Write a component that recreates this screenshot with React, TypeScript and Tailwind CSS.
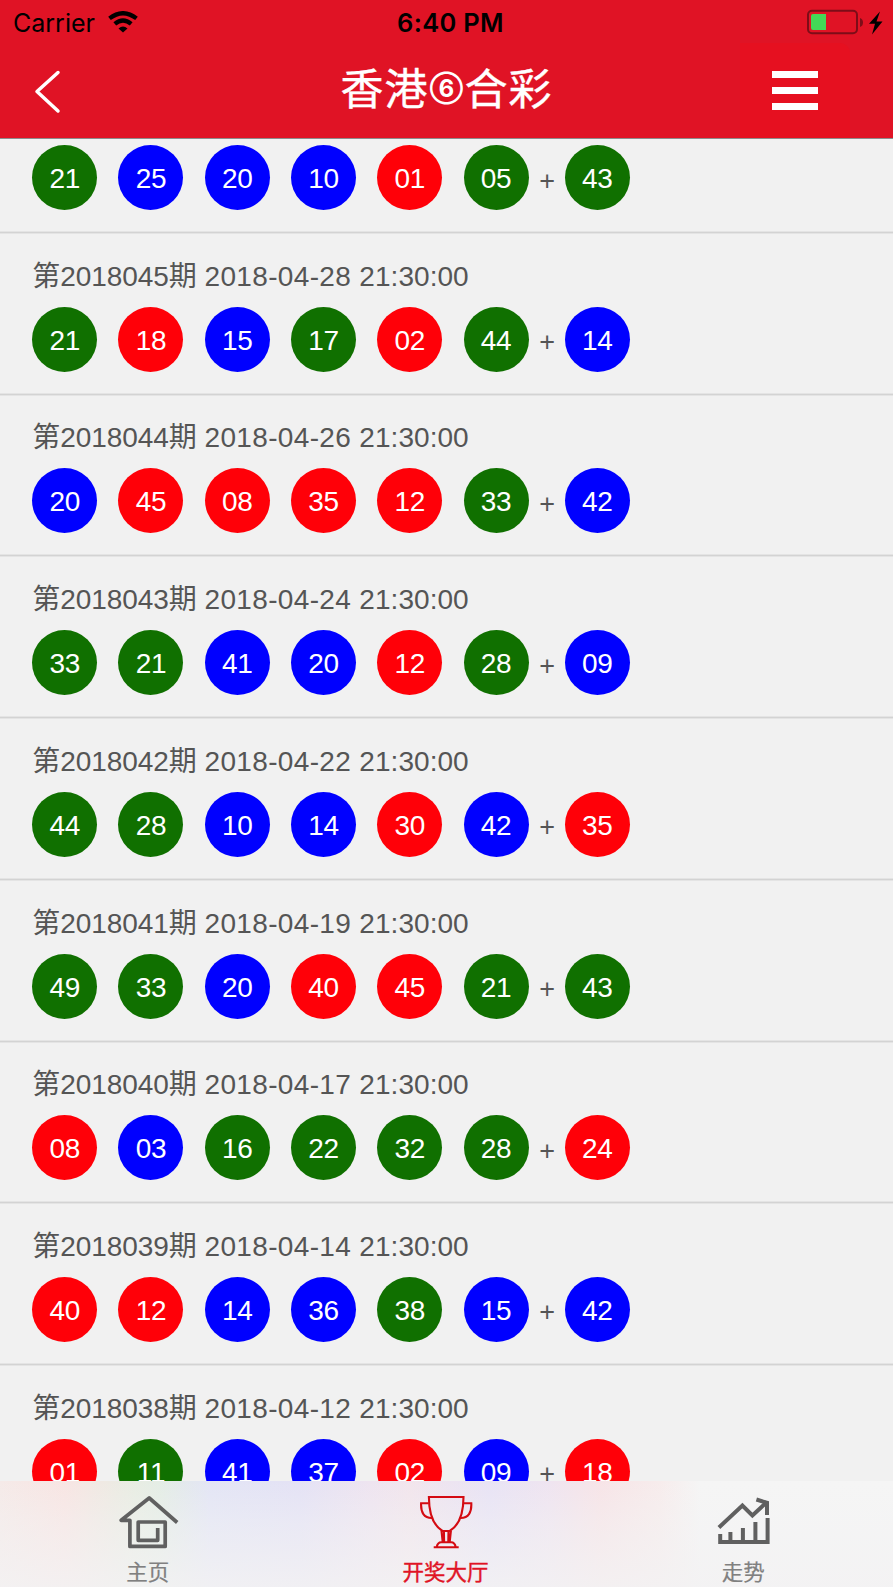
import React from "react";

type Tone = "g" | "b" | "r";

interface Draw {
  issue: string;
  date: string;
  balls: string[];
  tones: string;
}

const toneClass: Record<Tone, string> = {
  g: "bg-[#107000]",
  b: "bg-[#0000ff]",
  r: "bg-[#ff0008]",
};

const draws: Draw[] = [
  { issue: "2018045", date: "2018-04-28", balls: ["21", "18", "15", "17", "02", "44", "14"], tones: "grbgrgb" },
  { issue: "2018044", date: "2018-04-26", balls: ["20", "45", "08", "35", "12", "33", "42"], tones: "brrrrgb" },
  { issue: "2018043", date: "2018-04-24", balls: ["33", "21", "41", "20", "12", "28", "09"], tones: "ggbbrgb" },
  { issue: "2018042", date: "2018-04-22", balls: ["44", "28", "10", "14", "30", "42", "35"], tones: "ggbbrbr" },
  { issue: "2018041", date: "2018-04-19", balls: ["49", "33", "20", "40", "45", "21", "43"], tones: "ggbrrgg" },
  { issue: "2018040", date: "2018-04-17", balls: ["08", "03", "16", "22", "32", "28", "24"], tones: "rbggggr" },
  { issue: "2018039", date: "2018-04-14", balls: ["40", "12", "14", "36", "38", "15", "42"], tones: "rrbbgbb" },
  { issue: "2018038", date: "2018-04-12", balls: ["01", "11", "41", "37", "02", "09", "18"], tones: "rgbbrbr" },
];

function Ball({ value, tone }: { value: string; tone: Tone }) {
  return (
    <span
      className={`flex size-[65px] shrink-0 items-center justify-center rounded-full pt-[3px] text-[28px] leading-none tracking-[-0.3px] text-white ${toneClass[tone]}`}
    >
      {value}
    </span>
  );
}

function BallRow({ balls, tones }: { balls: string[]; tones: string }) {
  return (
    <div className="flex items-center">
      <div className="flex gap-[21.27px]">
        {balls.slice(0, 6).map((value, i) => (
          <Ball key={i} value={value} tone={tones[i] as Tone} />
        ))}
      </div>
      <span className="flex w-[36.2px] justify-center pt-[7px] pl-[1px] text-[27px] leading-none text-[#555]">+</span>
      <Ball value={balls[6]} tone={tones[6] as Tone} />
    </div>
  );
}

function Separator() {
  return <div className="mt-[21px] h-[3px] w-full shrink-0 border-y border-[#e4e4e4] bg-[#d3d3d3]" />;
}

function DrawRow({ draw }: { draw: Draw }) {
  return (
    <li className="flex h-[161.71px] shrink-0 flex-col justify-end">
      <div className="pl-[32.2px]">
        <p className="mb-[10px] text-[28px] leading-[40px] tracking-[-0.05px] whitespace-pre text-[#555]">
          {`第${draw.issue}期 `}
          <span className="tracking-[0.35px]">{`${draw.date} `}</span>
          <span className="tracking-[0.05px]">21:30:00</span>
        </p>
        <BallRow balls={draw.balls} tones={draw.tones} />
      </div>
      <Separator />
    </li>
  );
}

function StatusBar() {
  return (
    <div className="grid h-[43px] grid-cols-3 items-center text-black">
      <div className="flex items-center gap-[13px] pl-[13px] font-['Inter','Liberation_Sans',sans-serif]">
        <span className="pt-[3px] text-[25px] leading-none tracking-[0px]">Carrier</span>
        <svg width="30" height="22" viewBox="0 0 30 22" className="mt-[1px]">
          <path d="M15 21.5 L19.500 17.4 Q15 13.5 10.500 17.4 Z" />
          <path d="M6.800 12.900 Q15 6 23.200 12.900" fill="none" stroke="black" strokeWidth="4.300" />
          <path d="M1.500 7.400 Q15 -3 28.500 7.400" fill="none" stroke="black" strokeWidth="4.300" />
        </svg>
      </div>
      <span className="pt-[3px] pl-[8px] text-center font-['Inter',sans-serif] text-[25.5px] leading-none font-semibold tracking-[0.3px]">
        6:40 PM
      </span>
      <div className="flex items-center justify-end pr-[10px]">
        <svg width="80" height="26" viewBox="0 0 80 26">
          <rect x="5" y="1.800" width="49" height="22.400" rx="4" fill="none" stroke="#7d0d18" strokeWidth="2" />
          <path d="M10 5h13v16H10a2 2 0 0 1-2-2V7a2 2 0 0 1 2-2z" fill="#44d857" />
          <path d="M57 9q3 1 3 4.500q0 3.500-3 4.500z" fill="#7d0d18" />
          <path d="M77 2.500 66 14.800h6L69 25.500 79.500 12.500h-6z" fill="black" />
        </svg>
      </div>
    </div>
  );
}

function NavBar() {
  return (
    <div className="flex h-[95px] items-stretch">
      <button aria-label="返回" className="w-[153px] pt-[3px] pl-[34px]">
        <svg width="28" height="44" viewBox="0 0 28 44" fill="none" stroke="white" strokeWidth="3.500" strokeLinecap="round" strokeLinejoin="round">
          <path d="M24 2.500 3 21.500 24 41" />
        </svg>
      </button>
      <h1 className="flex flex-1 items-center justify-center pb-[1px] text-[43px] leading-none tracking-[1px] text-white">
        <span className="[-webkit-text-stroke:0.4px_white]">香港</span>
        <span className="flex w-[36px] justify-center pb-[2px] font-['Inter',sans-serif] text-[24px] leading-none font-bold tracking-[0px]">
          ⑥
        </span>
        <span className="[-webkit-text-stroke:0.4px_white]">合彩</span>
      </h1>
      <button aria-label="菜单" className="mr-[43px] w-[110px] rounded-tr-[10px] bg-[#e61020]">
        <span className="flex flex-col gap-[9px] pl-[32px]">
          <span className="h-[7px] w-[46px] bg-white" />
          <span className="h-[7px] w-[46px] bg-white" />
          <span className="h-[7px] w-[46px] bg-white" />
        </span>
      </button>
    </div>
  );
}

function HomeIcon() {
  return (
    <svg width="60" height="54" viewBox="118.800 1495 60 54" fill="none" stroke="#606060" strokeWidth="3.700" strokeLinejoin="round">
      <path d="M177 1522.500 149 1498 121 1520.300H129.700V1546.400H165V1522H138V1540.300H157.500V1528" />
    </svg>
  );
}

function TrophyIcon() {
  return (
    <svg width="54" height="54" viewBox="419.800 1495 54 54" fill="none" stroke="#d40b12" strokeWidth="2.100">
      <path d="M428.700 1497H463.300C463.300 1514 459.500 1525 449.500 1531H442.300C432.500 1525 428.700 1514 428.700 1497Z" />
      <path d="M428.500 1503.300H420.900C420.500 1512 423.500 1518.500 432.500 1518M463.400 1503.300H471.100C471.500 1512 468.500 1518.500 459.500 1518" />
      <path d="M441.300 1531 442.500 1542M450.700 1531 449.500 1542M443.700 1531 443.900 1542M448.300 1531 448.100 1542" />
      <path d="M436.500 1547Q437.500 1542.300 441 1542.300H451Q454.500 1542.300 455.500 1547M433.500 1547.200H458.500" />
    </svg>
  );
}

function TrendIcon() {
  return (
    <svg width="54" height="54" viewBox="717.600 1495 54 54" fill="none" stroke="#606060" strokeWidth="4">
      <path d="M719.500 1527.500 743 1505.500 753 1515.500 767.500 1502" />
      <path d="M757 1499.500 767.600 1502.800V1515" />
      <path d="M720.800 1534V1542H768.200V1518M731 1542V1532M743.500 1542V1528M756 1542V1522" />
    </svg>
  );
}

function TabItem({ icon, label, active = false }: { icon: React.ReactNode; label: string; active?: boolean }) {
  return (
    <button className="flex flex-1 flex-col items-center pt-[14px]">
      {icon}
      <span
        className={`mt-[12px] pr-[2px] text-[21.5px] leading-[24px] ${active ? "text-[#e01325] [-webkit-text-stroke:0.4px_#e01325]" : "text-[#808080] [-webkit-text-stroke:0.2px_#808080]"}`}
      >
        {label}
      </span>
    </button>
  );
}

export default function App() {
  return (
    <div className="flex h-[1587px] w-[893px] flex-col overflow-hidden bg-[#f1f1f1] font-['Liberation_Sans','Noto_Sans_CJK_SC',sans-serif]">
      <header className="h-[139px] shrink-0 border-b border-[#8c8c8c] bg-[#e01325]">
        <StatusBar />
        <NavBar />
      </header>

      <ul className="flex min-h-0 flex-1 flex-col overflow-hidden">
        <li className="flex h-[95px] shrink-0 flex-col justify-end">
          <div className="pl-[32.2px]">
            <BallRow balls={["21", "25", "20", "10", "01", "05", "43"]} tones="gbbbrgg" />
          </div>
          <Separator />
        </li>
        {draws.map((draw) => (
          <DrawRow key={draw.issue} draw={draw} />
        ))}
      </ul>

      <nav className="h-[106px] shrink-0 bg-[linear-gradient(to_right,#f5eae8_0px,#f8e5e3_65px,#e8ede3_135px,#e4ede5_160px,#e3e5f5_210px,#e4e2f5_300px,#eee4f0_370px,#f2e5ec_410px,#e8e3f5_490px,#efe4f0_550px,#f7e4e7_600px,#f7ecec_660px,#f5f5f5_700px)]">
        <div className="flex h-full bg-[linear-gradient(to_bottom,rgba(243,243,244,0)_0%,rgba(243,243,244,0.400)_40%,rgba(243,242,243,0.850)_100%)]">
          <TabItem icon={<HomeIcon />} label="主页" />
          <TabItem icon={<TrophyIcon />} label="开奖大厅" active />
          <TabItem icon={<TrendIcon />} label="走势" />
        </div>
      </nav>
    </div>
  );
}
